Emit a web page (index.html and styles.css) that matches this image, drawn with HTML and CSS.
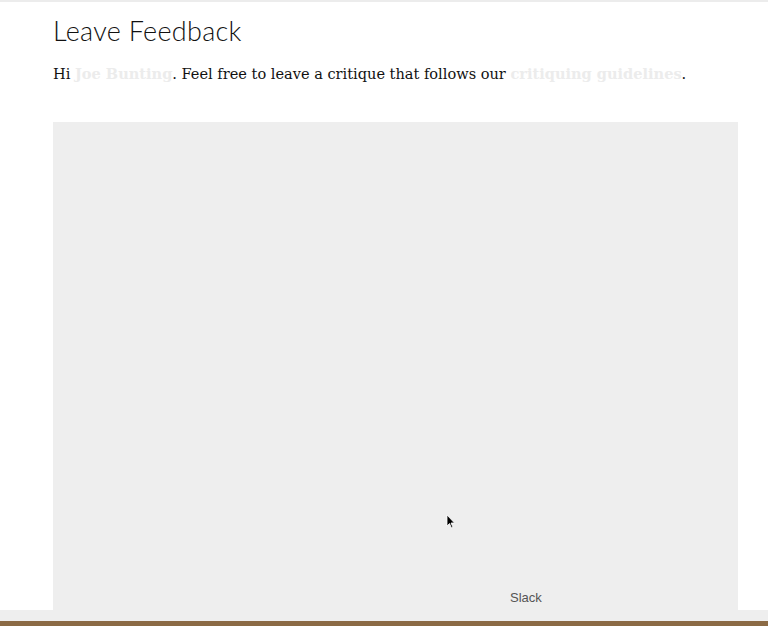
FILE: index.html
```html
<!DOCTYPE html>
<html lang="en">
<head>
<meta charset="UTF-8">
<meta name="viewport" content="width=device-width, initial-scale=1.0">
<title>Leave Feedback</title>
<link rel="stylesheet" href="styles.css">
</head>
<body>
<div class="page">
    <div class="container">
        <h2>Leave Feedback</h2>
        <p class="intro">Hi <a href="#">Joe Bunting</a>. Feel free to leave a critique that follows our <a href="#">critiquing guidelines</a>.</p>
        <div class="embed">
            <svg class="cursor" width="10" height="15" viewBox="0 0 10 15">
                <path d="M1 1 L1 12 L3.5 9.5 L5.5 14 L7 13.3 L5 9 L8.5 9 Z" fill="#000" stroke="#fff" stroke-width="0.8"/>
            </svg>
            <div class="embed-label">Slack</div>
        </div>
    </div>
</div>
<div class="strip"></div>
<div class="floor"></div>
</body>
</html>
```

FILE: styles.css
```css
body {
    margin: 0;
    background-color: #fff;
    font-family: "DejaVu Serif", serif;
    overflow: hidden;
}
.page {
    border-top: 2px solid #ececec;
    height: 608px;
}
.container {
    padding: 0 30px 0 53px;
}
h2 {
    font-family: "Lato", sans-serif;
    font-weight: 300;
    font-size: 27px;
    letter-spacing: 0.3px;
    color: #111;
    margin: 13px 0 0;
    line-height: 32px;
}
.intro {
    font-size: 14.55px;
    color: #111;
    margin: 15px 0 0;
    line-height: 24px;
}
.intro a {
    color: #ececec;
    font-weight: bold;
    text-decoration: none;
}
.embed {
    position: relative;
    margin-top: 36px;
    width: 685px;
    height: 488px;
    background-color: #eeeeee;
    display: flex;
    flex-direction: column;
    justify-content: flex-end;
}
.embed-label {
    font-family: "Liberation Sans", sans-serif;
    font-size: 13px;
    color: #555;
    padding: 0 0 5px 457px;
}
.cursor {
    position: absolute;
    left: 393px;
    top: 392px;
}
.strip {
    height: 11px;
    background-color: #eeeeee;
}
.floor {
    height: 5px;
    background-color: #8b6a45;
}
```
